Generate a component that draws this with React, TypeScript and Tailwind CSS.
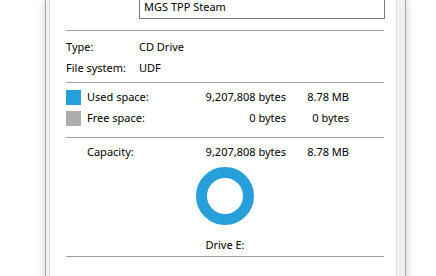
import React from 'react';

const font = { fontFamily: '"Noto Sans", "Open Sans", sans-serif' };

const Sep = ({ mt }: { mt: string }) => <div className={`${mt} h-px w-[318px] bg-[#a0a0a0]`} />;

const SpaceRow: React.FC<{ swatch?: string; label: string; bytes: string; short: string; className?: string }> = ({
  swatch,
  label,
  bytes,
  short,
  className = '',
}) => (
  <div className={`flex h-[21px] items-center ${className}`}>
    <div className="w-[21px] shrink-0">
      {swatch && <div className={`h-[15px] w-[15px] ${swatch}`} />}
    </div>
    <div className="w-[100px] shrink-0">{label}</div>
    <div className="w-[99px] shrink-0 text-right">{bytes}</div>
    <div className="w-[63px] shrink-0 text-right">{short}</div>
  </div>
);

export default function App() {
  return (
    <div className="relative flex h-[276px] w-[436px] overflow-hidden bg-white text-[11px] text-black" style={font}>
      {/* dialog window */}
      <div className="ml-[45px] flex h-[300px] w-[361px] border-x border-[#aaaaaa] bg-[#f0f0f0] pl-[3px] pr-[8px] shadow-[0_0_8px_rgba(0,0,0,0.22)]">
        {/* tab page */}
        <div className="flex w-[348px] flex-col border-x border-[#d9d9d9] bg-white pl-[16px]">
          <div className="ml-[73px] mt-[-5px] flex h-[24px] w-[246px] items-center border border-[#7a7a7a] pl-[4px]">
            MGS TPP Steam
          </div>

          <Sep mt="mt-[11px]" />

          <div className="mt-[6px] flex h-[21px] items-center">
            <div className="w-[73px]">Type:</div>
            <div>CD Drive</div>
          </div>
          <div className="flex h-[21px] items-center">
            <div className="w-[73px]">File system:</div>
            <div>UDF</div>
          </div>

          <Sep mt="mt-[3px]" />

          <SpaceRow className="mt-[4px]" swatch="bg-[#26a0da]" label="Used space:" bytes="9,207,808 bytes" short="8.78 MB" />
          <SpaceRow swatch="bg-[#adadad]" label="Free space:" bytes="0 bytes" short="0 bytes" />

          <Sep mt="mt-[8px]" />

          <SpaceRow className="mt-[4px]" label="Capacity:" bytes="9,207,808 bytes" short="8.78 MB" />

          <div className="mt-[4px] flex w-[318px] justify-center">
            <svg width="58" height="58" viewBox="0 0 58 58">
              <circle cx="29" cy="29" r="23.5" fill="none" stroke="#26a0da" strokeWidth="11" />
            </svg>
          </div>

          <div className="mt-[12px] flex h-[16px] w-[318px] items-center justify-center">Drive E:</div>

          <Sep mt="mt-[3px]" />
        </div>
      </div>
    </div>
  );
}
